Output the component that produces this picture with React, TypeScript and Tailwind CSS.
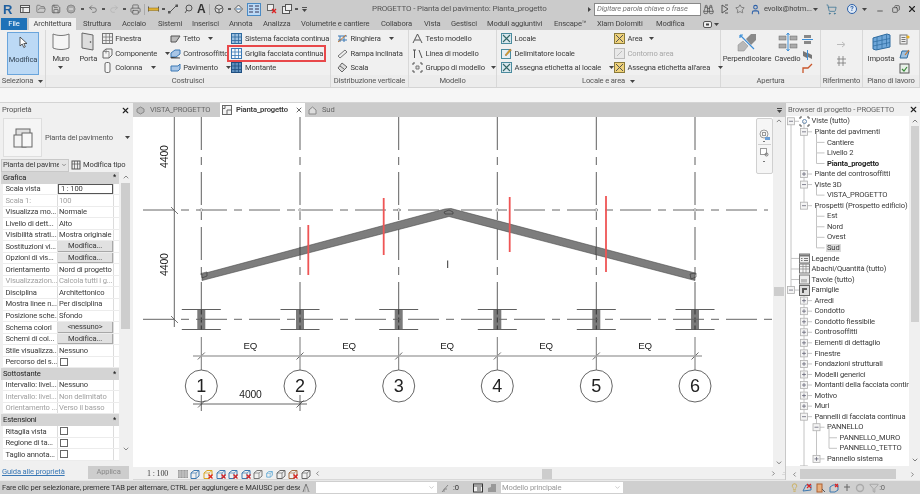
import React from "react";
import { Binoculars, FolderOpen, Minus, Printer, Redo2, Save, ShoppingCart, Star, Undo2, User, X, ChevronUp, ChevronDown, ChevronLeft, ChevronRight, Filter, Lightbulb, Copy } from "lucide-react";

const S = ({ w = 11, h = 11, vb = "0 0 11 11", children, className = "" }: any) => (
  <svg width={w} height={h} viewBox={vb} className={`shrink-0 ${className}`}>{children}</svg>
);
const Caret = ({ c = "#444" }: { c?: string }) => (
  <svg width="5" height="3" viewBox="0 0 5 3" className="shrink-0"><path d="M0 0h5L2.5 3z" fill={c} /></svg>
);
const Dot = () => <div className="w-[3px] h-[2px] bg-[#555] shrink-0" />;

const GridIco = ({ c = "#6a8caf", f = "#e8eef5" }: any) => (
  <S><rect x=".5" y=".5" width="10" height="10" fill={f} stroke={c} /><path d="M4 .5v10M7.5.5v10M.5 4h10M.5 7.5h10" stroke={c} strokeWidth=".8" /></S>
);
const BoxIco = ({ c = "#666" }: any) => (
  <S><path d="M1 3.5l3-2.5h6v6l-3 3H1z" fill="#f4f4f4" stroke={c} /><path d="M4 1v4.5M1 3.5h6v6.5" stroke={c} strokeWidth=".7" fill="none" /></S>
);
const BlueFlat = () => <S><path d="M1 5l4-3h5v4l-4 3H1z" fill="#a9c6e6" stroke="#3a78b5" /><path d="M1 9v1h9" stroke="#555" /></S>;
const RoomIco = ({ c = "#4b8b9e", f = "#d9e8ee", y = false }: any) => (
  <S><rect x=".5" y=".5" width="10" height="10" fill={f} stroke={c} /><path d="M2 2l7 7M9 2L2 9" stroke={y ? "#555" : "#366"} strokeWidth="1.1" /></S>
);
const YellowIco = () => <S><rect x=".5" y=".5" width="10" height="10" fill="#efd27a" stroke="#8a7a3a" /><path d="M2 2l7 7M9 2L2 9" stroke="#555" /></S>;

const Item = ({ icon, label, caret, gray, gap = "gap-[2.5px]", caretClass = "ml-[6px]" }: any) => (
  <div className={`flex items-center h-[14.6px] ${gap} whitespace-nowrap ${gray ? "text-[#a8a8a8]" : ""}`}>
    {icon}
    <span>{label}</span>
    {caret && <span className={caretClass}><Caret /></span>}
  </div>
);

const Panel = ({ w, label, children, caret }: any) => (
  <div className={`${w} flex flex-col border-r border-[#d8d8d8] shrink-0`}>
    <div className="h-[45px] flex pt-[1.5px]">{children}</div>
    <div className="h-[12px] flex items-center justify-center gap-[5px] bg-[#ececec] text-[#555]">
      <span>{label}</span>{caret && <Caret />}
    </div>
  </div>
);

const tabs: [string, string][] = [
  ["Struttura", "w-[39px]"], ["Acciaio", "w-[36px]"], ["Sistemi", "w-[34px]"], ["Inserisci", "w-[37px]"], ["Annota", "w-[34px]"],
  ["Analizza", "w-[38px]"], ["Volumetrie e cantiere", "w-[80px]"], ["Collabora", "w-[43px]"], ["Vista", "w-[27px]"], ["Gestisci", "w-[36px]"],
  ["Moduli aggiuntivi", "w-[67px]"], ["Enscape™", "w-[43px]"], ["Xlam Dolomiti", "w-[59px]"], ["Modifica", "w-[47px]"],
];

type Row = { l: string; v?: string; k?: "btn" | "input" | "check"; g?: boolean; h?: boolean };
const rows: Row[] = [
  { l: "Grafica", h: true },
  { l: "Scala vista", v: "1 : 100", k: "input" },
  { l: "Scala  1:", v: "100", g: true },
  { l: "Visualizza mo...", v: "Normale" },
  { l: "Livello di dett...", v: "Alto" },
  { l: "Visibilità strati...", v: "Mostra originale" },
  { l: "Sostituzioni vi...", v: "Modifica...", k: "btn" },
  { l: "Opzioni di vis...", v: "Modifica...", k: "btn" },
  { l: "Orientamento", v: "Nord di progetto" },
  { l: "Visualizzazion...", v: "Calcola tutti i g...", g: true },
  { l: "Disciplina", v: "Architettonico" },
  { l: "Mostra linee n...", v: "Per disciplina" },
  { l: "Posizione sche...", v: "Sfondo" },
  { l: "Schema colori", v: "<nessuno>", k: "btn" },
  { l: "Schemi di col...", v: "Modifica...", k: "btn" },
  { l: "Stile visualizza...", v: "Nessuno" },
  { l: "Percorso del s...", k: "check" },
  { l: "Sottostante", h: true },
  { l: "Intervallo: livel...", v: "Nessuno" },
  { l: "Intervallo: livel...", v: "Non delimitato", g: true },
  { l: "Orientamento ...", v: "Verso il basso", g: true },
  { l: "Estensioni", h: true },
  { l: "Ritaglia vista", k: "check" },
  { l: "Regione di ta...", k: "check" },
  { l: "Taglio annota...", k: "check" },
];

const PropRow = ({ r }: { r: Row }) =>
  r.h ? (
    <div className="h-[11.55px] bg-[#d4d4d4] flex items-center justify-between pl-[2px] pr-[3px] text-[#222]">
      <span>{r.l}</span><span className="text-[7px] font-bold leading-none">*</span>
    </div>
  ) : (
    <div className={`h-[11.55px] flex bg-white border-b border-[#ececec] ml-[2px] ${r.g ? "text-[#a0a0a0]" : ""}`}>
      <div className="w-[55px] pl-[2.5px] overflow-hidden whitespace-nowrap flex items-center border-r border-[#dcdcdc]">{r.l}</div>
      <div className="w-[56px] flex items-center border-r border-[#dcdcdc] whitespace-nowrap overflow-hidden">
        {r.k === "btn" ? (
          <div className="w-full h-full bg-[#e1e1e1] border-r border-b border-[#a8a8a8] flex items-center justify-center">{r.v}</div>
        ) : r.k === "input" ? (
          <div className="w-full h-full bg-white border border-[#555] pl-[2px] flex items-center">{r.v}</div>
        ) : r.k === "check" ? (
          <div className="ml-[2px] w-[8px] h-[8px] border border-[#666] bg-white" />
        ) : (
          <span className="pl-[1px]">{r.v}</span>
        )}
      </div>
    </div>
  );

type T = { t: string; l: number; e?: "+" | "-"; i?: string; b?: boolean; s?: boolean };
const tree: T[] = [
  { t: "Viste (tutto)", l: 0, e: "-", i: "view" },
  { t: "Piante dei pavimenti", l: 1, e: "-" },
  { t: "Cantiere", l: 2 }, { t: "Livello 2", l: 2 }, { t: "Pianta_progetto", l: 2, b: true },
  { t: "Piante dei controsoffitti", l: 1, e: "+" },
  { t: "Viste 3D", l: 1, e: "-" },
  { t: "VISTA_PROGETTO", l: 2 },
  { t: "Prospetti (Prospetto edificio)", l: 1, e: "-" },
  { t: "Est", l: 2 }, { t: "Nord", l: 2 }, { t: "Ovest", l: 2 }, { t: "Sud", l: 2, s: true },
  { t: "Legende", l: 0, i: "leg" }, { t: "Abachi/Quantità (tutto)", l: 0, i: "tab" }, { t: "Tavole (tutto)", l: 0, i: "sheet" },
  { t: "Famiglie", l: 0, e: "-", i: "fam" },
  ...["Arredi", "Condotto", "Condotto flessibile", "Controsoffitti", "Elementi di dettaglio", "Finestre", "Fondazioni strutturali", "Modelli generici", "Montanti della facciata contin", "Motivo", "Muri"].map((t) => ({ t, l: 1, e: "+" as const })),
  { t: "Pannelli di facciata continua", l: 1, e: "-" },
  { t: "PANNELLO", l: 2, e: "-" },
  { t: "PANNELLO_MURO", l: 3 }, { t: "PANNELLO_TETTO", l: 3 },
  { t: "Pannello sistema", l: 2, e: "+" },
  { t: "Parapetti", l: 1, e: "+" },
];
const RH = 10.55;
const eX = [5, 18, 30.5, 43];
const textPad = ["pl-[26px]", "pl-[28.5px]", "pl-[41px]", "pl-[53.5px]"];

const TreeLines = () => {
  const segs: React.ReactNode[] = [];
  const boxes: React.ReactNode[] = [];
  const Y = (i: number) => RH / 2 + i * RH;
  tree.forEach((n, i) => {
    const x = eX[n.l];
    let j = i - 1;
    while (j >= 0 && tree[j].l > n.l) j--;
    if (j >= 0) {
      segs.push(<path key={`v${i}`} d={`M${x} ${Y(j)}V${Y(i)}`} stroke="#c4c4c4" strokeWidth="1" />);
    }
    const end = n.l === 0 ? 13 : x + 8;
    segs.push(<path key={`h${i}`} d={`M${x} ${Y(i)}H${end}`} stroke="#c4c4c4" strokeWidth="1" />);
    if (n.e) {
      boxes.push(
        <g key={`b${i}`}>
          <rect x={x - 3.5} y={Y(i) - 3.5} width="7" height="7" fill="#f4f4f4" stroke="#b0b0b0" strokeWidth=".8" />
          <path d={n.e === "+" ? `M${x - 2} ${Y(i)}h4M${x} ${Y(i) - 2}v4` : `M${x - 2} ${Y(i)}h4`} stroke="#667" strokeWidth=".8" />
        </g>
      );
    }
  });
  return (
    <svg className="absolute left-0 top-0 pointer-events-none" width="124" height="360" viewBox="0 0 124 360">
      {segs}{boxes}
    </svg>
  );
};

const TreeIcon = ({ k }: { k: string }) => {
  if (k === "view") return <S><path d="M1 3V1h2M8 1h2v2M10 8v2H8M3 10H1V8" stroke="#555" fill="none" /><rect x="3.5" y="3.5" width="4" height="4" rx="2" fill="none" stroke="#6a8caf" /></S>;
  if (k === "leg") return <S><rect x=".5" y="1" width="10" height="9" fill="#eee" stroke="#777" /><rect x="1" y="1.5" width="9" height="2" fill="#777" /><path d="M2 5.5h1.5M5 5.5h4M2 7.5h1.5M5 7.5h4" stroke="#777" /></S>;
  if (k === "tab") return <S><rect x=".5" y="1" width="10" height="9" fill="#f5f5f5" stroke="#777" /><path d="M.5 3.5h10M.5 6h10M4 1v9M7 1v9" stroke="#888" strokeWidth=".7" /></S>;
  if (k === "sheet") return <S><rect x=".5" y="1" width="10" height="9" fill="#eee" stroke="#777" /><rect x="2" y="5" width="6" height="3.5" fill="#bbb" /></S>;
  return <S><rect x=".5" y=".5" width="10" height="10" fill="#ddd" stroke="#666" /><path d="M3 8V3h5v2H5v3z" fill="#555" /></S>;
};

const gridX = [201.3, 300, 398.7, 497.3, 596.3, 695];
const Canvas = () => (
  <svg width="640" height="350" viewBox="133 117 640 350" className="block bg-white">
    {gridX.map((x, i) => (
      <g key={x} stroke="#5f5f5f" fill="none">
        <path d={`M${x} 117V309`} strokeDasharray="33 7 8 7" strokeWidth="1" />
        <rect x={x - 4} y="309.5" width="8" height="20" fill="#7b7b7b" stroke="none" />
        <path d={`M${x - 19.5} 309.5h39M${x - 19.5} 329.5h39`} strokeWidth="1" />
        <path d={`M${x} 309.5V329.5`} strokeDasharray="5 3" stroke="#333" />
        <path d={`M${x} 337V370`} stroke="#777" />
        <circle cx={x} cy="386" r="16" fill="#fff" stroke="#555" strokeWidth=".9" />
        <path d={`M${x - 3.5} 359.5l7-7`} stroke="#444" strokeWidth=".8" />
      </g>
    ))}
    <path d="M143 210H768M143 319.3H773" stroke="#666" strokeWidth="1" strokeDasharray="31 7 8 7" fill="none" />
    {gridX.map((x) => <circle key={x} cx={x} cy="210" r="1.3" fill="#fff" stroke="#777" strokeWidth=".7" />)}
    <path d="M174.3 117V327" stroke="#666" />
    <path d="M171 207l7 7M171 316l7 7" stroke="#555" strokeWidth=".8" />
    <polygon points="202,274 445,209 451,208.5 695,273 695,280.5 449,216.5 202,280.5" fill="#7d7d7d" stroke="#4c4c4c" strokeWidth=".6" />
    <path d="M201 273.5l6-1.5v4l-5 2zM690 274l6-1v4l-5 2zM444 212l5-2 4 2v2h-8z" fill="none" stroke="#333" strokeWidth=".6" />
    <path d="M300 247v8M596 247v8" stroke="#333" strokeWidth=".7" />
    <path d="M308.3 225V275M383.7 198V255M509.7 197V252M606 196V272" stroke="#ef5555" strokeWidth="1.8" />
    <path d="M447.7 260.5V268" stroke="#333" strokeWidth="1" />
    <path d="M193 356H702" stroke="#aaa" strokeWidth="1.4" />
    <path d="M193 404H307M201.3 395V411M300 395V411" stroke="#555" strokeWidth=".9" />
    <path d="M198 407.5l7-7M296.5 407.5l7-7" stroke="#444" strokeWidth=".8" />
    <g fontFamily="'Liberation Sans',sans-serif" fill="#222">
      {[250.3, 349, 447, 546, 645].map((x) => <text key={x} x={x} y="349" fontSize="9.7" textAnchor="middle">EQ</text>)}
      <text x="250.5" y="398" fontSize="10.3" textAnchor="middle">4000</text>
      {gridX.map((x, i) => <text key={x} x={x} y="392.3" fontSize="18" textAnchor="middle">{i + 1}</text>)}
      <text transform="translate(168 168) rotate(-90)" fontSize="10.5">4400</text>
      <text transform="translate(168 276) rotate(-90)" fontSize="10.5">4400</text>
    </g>
  </svg>
);

const MiniIcons = () => {
  const cols = ["#888", "#3d78b0", "#d9a520", "#3d78b0", "#3d78b0", "#3d78b0", "#777", "#3d9ad0", "#666", "#a06a40", "#666"];
  const xs = [true, false, true, true, true, true, false, false, false, true, false];
  return (
    <div className="flex items-center gap-[2.6px]">
      {cols.map((c, i) => (
        <S key={i} w={i === 7 ? 7 : 10} h={10} vb="0 0 10 10">
          {i === 0 ? <g><rect y="1" width="10" height="8" fill="#999" /><path d="M0 3h10M0 5h10M0 7h10M2 1v8M5 1v8M8 1v8" stroke="#ddd" strokeWidth=".6" /></g> :
            <g><path d="M1 4l3-2.5h5V7l-3 2.5H1z" fill="none" stroke={c} strokeWidth="1" /><path d="M1 4h5v5.5M6 4l3-2.5" stroke={c} strokeWidth=".7" fill="none" /></g>}
          {xs[i] && i !== 0 && <path d="M5.5 5.5l4 4M9.5 5.5l-4 4" stroke="#d22" strokeWidth="1.2" />}
        </S>
      ))}
    </div>
  );
};

export default function App() {
  return (
    <div className="w-[920px] h-[494px] overflow-hidden flex flex-col bg-[#f0f0f0] text-[#3a3a3a] text-[7.6px] tracking-[-0.02em] leading-none font-['Roboto',sans-serif] blur-[0.3px]">
      {/* title */}
      <div className="h-[18px] bg-[#cbcbcb] flex items-center relative shrink-0">
        <span className="ml-[3px] w-[11px] text-[13px] font-bold text-[#1f5f9f] font-['Liberation_Sans',sans-serif]">R</span>
        <div className="ml-[6px] flex items-center text-[#555]">
          <S w={10} h={10} vb="0 0 10 10"><rect x=".5" y="1.5" width="9" height="7" fill="#eee" stroke="#555" /><path d="M.5 3.5h9M3 3.5v5" stroke="#555" /></S>
          <FolderOpen size={10} strokeWidth={1.4} className="ml-[6px]" />
          <Save size={10} strokeWidth={1.8} className="ml-[5px]" />
          <S w={10} h={10} vb="0 0 10 10" className="ml-[5px]"><circle cx="5" cy="5" r="4" fill="#aaa" stroke="#888" /><path d="M3 5h4" stroke="#eee" /></S>
          <div className="ml-[5px]"><Dot /></div>
          <Undo2 size={10} strokeWidth={1.5} className="ml-[4px]" />
          <div className="ml-[4px]"><Dot /></div>
          <Redo2 size={10} strokeWidth={1.3} className="ml-[4px] text-[#aaa]" />
          <div className="ml-[4px]"><Dot /></div>
          <Printer size={11} strokeWidth={1.5} className="ml-[4px]" />
          <div className="ml-[3px] w-px h-[11px] bg-[#aaa]" />
          <S w={11} h={10} vb="0 0 11 10" className="ml-[3px]"><path d="M.5 2.5v5M10.5 2.5v5" stroke="#555" /><rect x=".5" y="4" width="10" height="2.5" fill="#e0b030" stroke="#8a6a10" strokeWidth=".5" /></S>
          <div className="ml-[3px]"><Dot /></div>
          <S w={10} h={10} vb="0 0 10 10" className="ml-[3px]"><path d="M1 9l8-8" stroke="#555" /><rect x="0" y="7" width="2.5" height="2.5" fill="#555" /><rect x="7.5" y=".5" width="2.5" height="2.5" fill="#555" /></S>
          <S w={9} h={10} vb="0 0 9 10" className="ml-[6px]"><circle cx="5" cy="4" r="3" fill="none" stroke="#555" /><path d="M3 6L1 9" stroke="#555" /></S>
          <span className="ml-[4px] w-[9px] text-[12px] font-bold text-[#333] font-['Liberation_Sans',sans-serif]">A</span>
          <div className="ml-[3px] w-px h-[11px] bg-[#aaa]" />
          <S w={10} h={10} vb="0 0 10 10" className="ml-[4px]"><circle cx="5" cy="5" r="4" fill="#ddd" stroke="#555" /><path d="M2 4l3 1.5L8 4M5 5.5V9" stroke="#555" fill="none" /></S>
          <div className="ml-[4px]"><Dot /></div>
          <S w={9} h={10} vb="0 0 9 10" className="ml-[3px]"><path d="M4.5 1l4 4-4 4-4-4z" fill="#eee" stroke="#555" /><path d="M2 5h5" stroke="#3d78b0" /></S>
          <div className="ml-[4px] w-[14px] h-[13px] bg-[#bcd9f5] border border-[#4a8ac4] flex items-center justify-center">
            <S w={10} h={9} vb="0 0 10 9"><path d="M0 1h4M0 4h4M0 7h4M6 1h4M6 4h4M6 7h4" stroke="#335" strokeWidth="1" /></S>
          </div>
          <S w={10} h={10} vb="0 0 10 10" className="ml-[6px]"><rect x=".5" y=".5" width="6" height="6" fill="#eee" stroke="#666" /><path d="M5 5l4 4M9 5L5 9" stroke="#d22" strokeWidth="1.3" /></S>
          <S w={10} h={10} vb="0 0 10 10" className="ml-[5px]"><rect x=".5" y="2.5" width="7" height="7" fill="#eee" stroke="#555" /><rect x="3.5" y=".5" width="6" height="6" fill="#eee" stroke="#555" /></S>
          <div className="ml-[3px]"><Dot /></div>
          <div className="ml-[4px] flex flex-col items-center gap-[1px]"><div className="w-[5px] h-px bg-[#555]" /><Caret /></div>
        </div>
        <span className="absolute left-[372px] top-[2px] h-[13px] flex items-center whitespace-nowrap text-[#555] text-[8px]">PROGETTO - Pianta del pavimento: Pianta_progetto</span>
        <div className="ml-auto flex items-center">
          <svg width="3" height="5" viewBox="0 0 3 5" className="mr-[3px]"><path d="M0 0l3 2.5L0 5z" fill="#444" /></svg>
          <div className="w-[107px] h-[13px] bg-white border border-[#888] pl-[2px] flex items-center italic text-[#777] whitespace-nowrap overflow-hidden">Digitare parola chiave o frase</div>
          <Binoculars size={11} strokeWidth={1.5} className="ml-[2px] text-[#444]" />
          <S w={10} h={10} vb="0 0 10 10" className="ml-[6px]"><path d="M2 1l6 4-6 4zM5 1h3M5 9h3" stroke="#555" fill="none" /></S>
          <Star size={10} strokeWidth={1.3} className="ml-[5px] text-[#444]" />
          <User size={11} strokeWidth={2.2} className="ml-[5px] text-[#2a5fa8]" />
          <span className="ml-[3px] whitespace-nowrap text-[#444] w-[46px]">evolix@hotm...</span>
          <div className="ml-[3px]"><Caret /></div>
          <ShoppingCart size={11} strokeWidth={1.5} className="ml-[8px] text-[#2a6a8f]" />
          <div className="ml-[10px] w-[10px] h-[10px] rounded-full border border-[#2a5fa8] bg-[#dfe9f5] text-[#2a5fa8] flex items-center justify-center text-[7px] font-bold">?</div>
          <div className="ml-[5px]"><Caret /></div>
          <Minus size={8} strokeWidth={2.2} className="ml-[9px] mt-[4px] text-[#333]" />
          <Copy size={8} strokeWidth={2} className="ml-[8px] text-[#333] -scale-x-100" />
          <X size={10} strokeWidth={2.6} className="ml-[7px] mr-[3px] text-[#222]" />
        </div>
      </div>
      {/* tabs */}
      <div className="h-[12px] bg-[#cbcbcb] flex items-stretch shrink-0 whitespace-nowrap text-[#444]">
        <div className="ml-[1px] w-[26px] bg-[#1f72b8] text-white flex items-center justify-center">File</div>
        <div className="ml-[2px] w-[47px] bg-[#f0f0f0] flex items-center justify-center">Architettura</div>
        <div className="w-[7px]" />
        {tabs.map(([t, w]) => <div key={t} className={`${w} flex items-center`}>{t}</div>)}
        <div className="flex items-center gap-[2px]">
          <S w={9} h={7} vb="0 0 9 7"><rect x=".5" y=".5" width="8" height="6" rx="1.5" fill="#eee" stroke="#555" /><rect x="3" y="2.5" width="3" height="2" fill="#444" /></S><Caret />
        </div>
      </div>
      {/* ribbon */}
      <div className="h-[58px] bg-[#f0f0f0] border-b border-[#d4d4d4] flex shrink-0 whitespace-nowrap overflow-hidden">
        <Panel w="w-[46px]" label="Seleziona" caret>
          <div className="ml-[7px] w-[32px] h-[43px] bg-[#bcd9f5] border border-[#6aa5dc] flex flex-col items-center">
            <svg width="9" height="13" viewBox="0 0 9 13" className="mt-[3px]"><path d="M1 1v9l2.2-2 1.6 3.5 1.5-.7L4.8 7.5H8z" fill="#fff" stroke="#333" strokeWidth=".8" /></svg>
            <span className="mt-[7px] text-[#345]">Modifica</span>
          </div>
        </Panel>
        <Panel w="w-[285px]" label="Costruisci">
          <div className="w-[30px] flex flex-col items-center">
            <svg width="18" height="19" viewBox="0 0 18 19"><path d="M1 2c5 2 11 2 16 0v14c-5 2-11 2-16 0z" fill="#f5f5f5" stroke="#777" /></svg>
            <span className="mt-[4px]">Muro</span>
            <span className="mt-[4px]"><Caret /></span>
          </div>
          <div className="w-[25px] flex flex-col items-center">
            <svg width="14" height="19" viewBox="0 0 14 19"><path d="M1 1l11 2v15L1 16z" fill="#ddd" stroke="#666" /><circle cx="9.5" cy="10" r=".8" fill="#444" /></svg>
            <span className="mt-[4px]">Porta</span>
          </div>
          <div className="w-[69px] pl-[1px]">
            <Item icon={<GridIco c="#777" f="#eee" />} label="Finestra" />
            <Item icon={<BoxIco />} label="Componente" caret caretClass="ml-[5px]" />
            <Item icon={<S><rect x="3" y=".5" width="5" height="10" rx="1.5" fill="#f5f5f5" stroke="#666" /></S>} label="Colonna" caret />
          </div>
          <div className="w-[62px]">
            <Item icon={<S><path d="M1 9V3h9L6 9z" fill="#bbb" stroke="#555" /></S>} label="Tetto" caret />
            <Item icon={<BlueFlat />} label="Controsoffitto" />
            <Item icon={<S><path d="M1 4h7l2-2v5l-2 2H1z" fill="#a9c6e6" stroke="#3a78b5" /></S>} label="Pavimento" caret />
          </div>
          <div className="w-[99px]">
            <Item icon={<GridIco c="#2d6a9f" f="#9cc0e0" />} label="Sistema facciata continua" />
            <div className="w-[99px] h-[17.6px] -my-[1.5px] -ml-[4px] pl-[2px] border-2 border-[#e8484a] flex items-center">
              <Item icon={<GridIco c="#3a78b5" f="#f5f8fc" />} label="Griglia facciata continua" />
            </div>
            <Item icon={<GridIco c="#1f4f80" f="#5f8fbd" />} label="Montante" />
          </div>
        </Panel>
        <Panel w="w-[78px]" label="Distribuzione verticale">
          <div className="pl-[6px]">
            <Item icon={<S><path d="M1 3h9M1 7h9M3 3v6M7 3v6" stroke="#3a78b5" /><path d="M1 9l8-7" stroke="#c9762a" /></S>} label="Ringhiera" caret />
            <Item icon={<S><path d="M1 8l7-6 2 2-7 6z" fill="#eee" stroke="#777" /></S>} label="Rampa inclinata" />
            <Item icon={<S><path d="M5 1l5 4-5 5-4-4z" fill="#ddd" stroke="#666" /><path d="M3 4l4 3" stroke="#666" /></S>} label="Scala" />
          </div>
        </Panel>
        <Panel w="w-[88px]" label="Modello">
          <div className="pl-[3px]">
            <Item icon={<S><path d="M5.5 1L1 10M5.5 1L10 10M3 7h5" stroke="#555" fill="none" /></S>} label="Testo modello" />
            <Item icon={<S><path d="M1 2h3M2.5 2v8M7 2l3 8" stroke="#555" fill="none" /></S>} label="Linea di modello" />
            <Item icon={<S><path d="M1 3V1h2M8 1h2v2M10 8v2H8M3 10H1V8" stroke="#555" fill="none" /><path d="M4 4h3v3H4z" fill="#ddd" stroke="#777" /></S>} label="Gruppo di modello" caret caretClass="ml-[4px]" />
          </div>
        </Panel>
        <Panel w="w-[224px]" label="Locale e area" caret>
          <div className="w-[116px] pl-[4px] shrink-0">
            <Item icon={<RoomIco />} label="Locale" />
            <Item icon={<S><rect x=".5" y="1.5" width="9" height="9" fill="#e8eef2" stroke="#4b8b9e" /><path d="M4 7l5-6 1.5 1L5 8z" fill="#d9a520" stroke="#855" strokeWidth=".4" /></S>} label="Delimitatore  locale" />
            <Item icon={<RoomIco />} label="Assegna etichetta  al locale" caret caretClass="ml-[5px]" />
          </div>
          <div className="pl-[1px]">
            <Item icon={<YellowIco />} label="Area" caret caretClass="ml-[4px]" />
            <Item gray icon={<S><rect x=".5" y=".5" width="10" height="10" fill="#e8e8e8" stroke="#bbb" /><path d="M3 8l5-5" stroke="#bbb" /></S>} label="Contorno  area" />
            <Item icon={<YellowIco />} label="Assegna etichetta  all'area" caret caretClass="ml-[5px]" />
          </div>
        </Panel>
        <Panel w="w-[100px]" label="Apertura">
          <div className="w-[52px] flex flex-col items-center">
            <svg width="20" height="20" viewBox="0 0 20 20"><path d="M9 7l5-5h5v6l-5 5z" fill="#8a8a8a" /><path d="M1 13l5-4 5 5-4 5H1z" fill="#b8b8b8" stroke="#888" strokeWidth=".5" /><path d="M3 3l14 14M3 3h3M3 3v3" stroke="#3d8fd8" strokeWidth="1.2" fill="none" /></svg>
            <span className="mt-[3px]">Perpendicolare</span>
          </div>
          <div className="w-[29px] flex flex-col items-center">
            <svg width="20" height="20" viewBox="0 0 20 20"><rect x="1" y="4" width="7" height="4" fill="#aaa" stroke="#666" strokeWidth=".5" /><rect x="12" y="4" width="7" height="4" fill="#aaa" stroke="#666" strokeWidth=".5" /><rect x="1" y="12" width="7" height="4" fill="#aaa" stroke="#666" strokeWidth=".5" /><rect x="12" y="12" width="7" height="4" fill="#aaa" stroke="#666" strokeWidth=".5" /><path d="M10 1v18M8.5 3L10 1l1.5 2M8.5 17l1.5 2 1.5-2" stroke="#3d8fd8" fill="none" /></svg>
            <span className="mt-[3px]">Cavedio</span>
          </div>
          <div className="pt-[1px]">
            <Item icon={<S><rect x="2" y="1" width="7" height="3" fill="#888" /><rect x="2" y="7" width="7" height="3" fill="#888" /><path d="M0 5.5h11" stroke="#3d8fd8" /></S>} label="" />
            <Item icon={<S><path d="M1 2l4 2v5L1 7zM6 4l4 2v4l-4-2z" fill="#777" /><path d="M5.5 1v10" stroke="#3d8fd8" /></S>} label="" />
            <Item icon={<S><path d="M1 10V5h5l4-4" stroke="#c9562a" strokeWidth="1.3" fill="none" /></S>} label="" />
          </div>
        </Panel>
        <Panel w="w-[42px]" label="Riferimento">
          <div className="w-full flex flex-col items-center pt-[7px] gap-[5px]">
            <S><path d="M1 5.5h7M6 3l3 2.5L6 8" stroke="#bbb" fill="none" /></S>
            <S><path d="M3 1v10M7 1v10M1 4h9M1 8h9" stroke="#777" strokeWidth=".8" /></S>
          </div>
        </Panel>
        <Panel w="w-[57px]" label="Piano di lavoro">
          <div className="w-[36px] flex flex-col items-center">
            <svg width="19" height="20" viewBox="0 0 19 20"><path d="M1 6l14-4 3 1v12L4 18l-3-1z" fill="#6ea6d8" stroke="#2d6a9f" /><path d="M5 5v13M10 3.5v13M14.5 2.5v12M1 10l17-3.5M1 14l17-3.5" stroke="#2d6a9f" strokeWidth=".7" /></svg>
            <span className="mt-[3px]">Imposta</span>
          </div>
          <div className="pt-[1px]">
            <Item icon={<S><rect x="1" y="1" width="7" height="9" fill="#eee" stroke="#777" /><path d="M2.5 3.5h4M2.5 5.5h4M2.5 7.5h4" stroke="#777" /><circle cx="9" cy="3" r="1.6" fill="#e8b020" /></S>} label="" />
            <Item icon={<S><path d="M1 9l2-7h7L8 9z" fill="#9cc0e0" stroke="#2d6a9f" /><path d="M6 6l4-5" stroke="#c9762a" strokeWidth="1.2" /></S>} label="" />
            <Item icon={<S><rect x="1" y="1" width="9" height="9" fill="#e8f0e8" stroke="#555" /><path d="M3 6l2 2 3-4" stroke="#3a8a3a" strokeWidth="1.2" fill="none" /></S>} label="" />
          </div>
        </Panel>
      </div>
      <div className="h-[15px] bg-[#f6f6f6] border-b border-[#d4d4d4] shrink-0" />
      {/* main */}
      <div className="flex-1 min-h-0 flex">
        {/* props */}
        <div className="w-[133px] shrink-0 flex flex-col bg-[#f0f0f0] overflow-hidden whitespace-nowrap">
          <div className="h-[14px] flex items-center justify-between pl-[2px] pr-[3px] text-[#555]">
            <span>Proprietà</span><X size={9} strokeWidth={3} className="text-[#222]" />
          </div>
          <div className="h-[41px] flex items-center ml-[3px] mr-[3px]">
            <div className="w-[39px] h-[39px] bg-[#f5f5f5] border border-[#dedede] flex items-center justify-center">
              <svg width="20" height="20" viewBox="0 0 20 20"><rect x="3" y="1" width="14" height="14" fill="#e0e0e0" stroke="#666" /><rect x="1" y="7" width="12" height="12" fill="#f4f4f4" stroke="#666" /><rect x="9" y="5" width="10" height="14" fill="#f8f8f8" stroke="#666" /></svg>
            </div>
            <span className="ml-[3px] text-[#555]">Pianta del pavimento</span>
            <span className="ml-auto"><Caret /></span>
          </div>
          <div className="h-[14px] flex items-center">
            <div className="ml-[1px] w-[68px] h-[13px] bg-[#e4e4e4] border border-[#c8c8c8] pl-[1px] flex items-center justify-between pr-[1px] overflow-hidden">
              <span className="w-[56px] overflow-hidden">Pianta del pavime</span><ChevronDown size={6} className="shrink-0" />
            </div>
            <S w={10} h={10} vb="0 0 10 10" className="ml-[2px]"><rect x="1" y="1" width="8" height="8" fill="#eee" stroke="#555" /><path d="M3.5 1v8M6.5 1v8M1 4h8" stroke="#555" strokeWidth=".7" /></S>
            <span className="ml-[2px]">Modifica tipo</span>
          </div>
          <div className="flex flex-1 min-h-0">
            <div className="w-[119px] shrink-0 overflow-hidden pl-[1px]">
              {rows.map((r, i) => <PropRow key={i} r={r} />)}
            </div>
            <div className="w-[11px] ml-[1px] bg-[#f0f0f0] flex flex-col items-center relative">
              <ChevronUp size={8} className="text-[#555] mt-[1px]" />
              <div className="mt-[2px] w-[9px] h-[146px] bg-[#cdcdcd]" />
              <ChevronDown size={8} className="text-[#555] mt-[116px]" />
            </div>
          </div>
          <div className="h-[16px] shrink-0 flex items-center pl-[2px]">
            <span className="text-[#3a78b5] underline w-[64px]">Guida alle proprietà</span>
            <div className="ml-[22px] w-[41px] h-[13px] bg-[#cdcdcd] text-[#8a8a8a] flex items-center justify-center">Applica</div>
          </div>
        </div>
        {/* center */}
        <div className="w-[652px] shrink-0 flex flex-col">
          <div className="h-[14px] bg-[#cbcbcb] flex items-stretch whitespace-nowrap shrink-0">
            <div className="w-[87px] flex items-center pl-[3px] text-[#666] gap-[5px]">
              <S w={9} h={9} vb="0 0 9 9"><path d="M4.5 1L8 3v3L4.5 8 1 6V3z" fill="#bbb" stroke="#888" /></S>
              <span>VISTA_PROGETTO</span>
            </div>
            <div className="w-[85px] bg-white flex items-center pl-[2px] gap-[4px]">
              <S w={10} h={10} vb="0 0 10 10"><rect x=".5" y=".5" width="9" height="9" fill="#f4f4f4" stroke="#666" /><path d="M3 .5v3H.5M5 9.5V5h4.5" stroke="#666" fill="none" /></S>
              <span className="font-semibold w-[55px]">Pianta_progetto</span>
              <X size={8} strokeWidth={2.2} className="text-[#333]" />
            </div>
            <div className="flex items-center pl-[3px] gap-[5px] text-[#666] flex-1">
              <S w={9} h={9} vb="0 0 9 9"><path d="M1 4L4.5 1 8 4v4H1z" fill="#ddd" stroke="#888" /></S>
              <span>Sud</span>
              <div className="ml-auto mr-[3px] flex flex-col items-center gap-[1px]"><div className="w-[5px] h-px bg-[#444]" /><Caret /></div>
            </div>
          </div>
          <div className="flex flex-1 min-h-0">
            <div className="w-[640px] h-[350px] relative overflow-hidden">
              <Canvas />
              <div className="absolute left-[622.5px] top-[1px] w-[17px] h-[56px] bg-[#f6f6f6] border border-[#d0d0d0] rounded-[2px] flex flex-col items-center pt-[10px]">
                <S w={11} h={11}><circle cx="5" cy="5" r="4" fill="none" stroke="#999" /><rect x="3.5" y="3.5" width="3" height="3" fill="none" stroke="#999" /><rect x="6" y="8" width="5" height="3" fill="#6a9fd8" /></S>
                <div className="mt-[1px] w-[2px] h-[1px] bg-[#777]" />
                <div className="mt-[2px] w-[13px] h-px bg-[#d0d0d0]" />
                <S w={9} h={9} vb="0 0 9 9" className="mt-[3px]"><rect x=".5" y=".5" width="6" height="6" fill="#fff" stroke="#999" /><circle cx="6.5" cy="6.5" r="1.5" fill="none" stroke="#777" /></S>
                <div className="mt-[4px] w-[2px] h-[1px] bg-[#777]" />
              </div>
            </div>
            <div className="w-[12px] h-[350px] bg-[#f0f0f0] flex flex-col items-center shrink-0">
              <ChevronUp size={8} className="text-[#444] mt-[0px]" />
              <div className="mt-[162px] w-[10px] h-[10px] bg-[#cdcdcd]" />
              <ChevronDown size={8} className="text-[#444] mt-[163px]" />
            </div>
          </div>
          <div className="h-[12px] bg-[#f0f0f0] flex items-center shrink-0 border-b border-[#d8d8d8]">
            <span className="ml-[14px] font-['Liberation_Serif',serif] text-[8px] w-[31px]">1 : 100</span>
            <MiniIcons />
            <ChevronLeft size={7} strokeWidth={2} className="ml-[3px] text-[#444]" />
            <div className="ml-[221px] w-[10px] h-[10px] bg-[#cdcdcd]" />
            <ChevronRight size={7} strokeWidth={2} className="ml-[218px] text-[#444]" />
            <span className="ml-[5px] text-[5px] text-[#999] leading-none">.::</span>
          </div>
        </div>
        {/* browser */}
        <div className="flex-1 min-w-0 flex flex-col border-l border-[#c8c8c8] whitespace-nowrap">
          <div className="h-[13px] bg-[#f0f0f0] flex items-center justify-between pl-[2px] pr-[2px] text-[#666] shrink-0">
            <span>Browser di progetto - PROGETTO</span><X size={9} strokeWidth={3} className="text-[#222]" />
          </div>
          <div className="flex-1 min-h-0 flex">
            <div className="w-[123px] h-[350px] bg-white relative overflow-hidden shrink-0">
              <TreeLines />
              <div className="relative">
                {tree.map((n) => (
                  <div key={n.t} className={`h-[10.55px] flex items-center ${n.i ? "pl-[12.5px] gap-[2px]" : textPad[n.l]}`}>
                    {n.i && <TreeIcon k={n.i} />}
                    <span className={`${n.b ? "font-bold text-[#222]" : ""} ${n.s ? "bg-[#dcdcdc] px-[1px] -ml-[1px]" : ""}`}>{n.t}</span>
                  </div>
                ))}
              </div>
            </div>
            <div className="flex-1 bg-[#f0f0f0] flex flex-col items-center">
              <ChevronUp size={8} className="text-[#444] mt-[1px]" />
              <div className="mt-[1px] w-[8px] h-[196px] bg-[#d0d0d0]" />
              <ChevronDown size={8} className="text-[#444] mt-[134px]" />
            </div>
          </div>
          <div className="h-[12px] bg-[#f0f0f0] flex items-center shrink-0 text-[#444]">
            <ChevronLeft size={7} strokeWidth={2} className="ml-[5px]" />
            <div className="ml-[2px] w-[96px] h-[10px] bg-[#cdcdcd]" />
            <ChevronRight size={7} strokeWidth={2} className="ml-[13px]" />
          </div>
        </div>
      </div>
      {/* status */}
      <div className="h-[14px] bg-[#cfcfcf] border-t border-[#e8e8e8] flex items-center shrink-0 whitespace-nowrap">
        <span className="ml-[2px] w-[298px] overflow-hidden text-[#333]">Fare clic per selezionare, premere TAB per alternare, CTRL per aggiungere e MAIUSC per desel</span>
        <S w={9} h={10} vb="0 0 9 10" className="ml-[2px]"><path d="M1 9l3-8 3 8" stroke="#777" fill="none" /><path d="M3 9V5M6 9V5" stroke="#aaa" /></S>
        <div className="ml-[5px] w-[121px] h-[11px] bg-white flex items-center justify-end pr-[2px]"><ChevronDown size={7} className="text-[#aaa]" /></div>
        <S w={9} h={10} vb="0 0 9 10" className="ml-[4px]"><path d="M1 9l6-7M3 9V6h3" stroke="#888" fill="none" /></S>
        <span className="ml-[3px] w-[12px] text-[#333]">:0</span>
        <S w={10} h={10} vb="0 0 10 10" className="ml-[8px]"><rect x=".5" y="1" width="9" height="8" fill="#eee" stroke="#333" /><path d="M.5 3h9M4 5h4M4 7h4" stroke="#333" strokeWidth=".8" /></S>
        <S w={10} h={10} vb="0 0 10 10" className="ml-[4px]"><path d="M1 9V5l3-1V1h5v8z" fill="#999" /></S>
        <div className="ml-[4px] w-[122px] h-[11px] bg-white flex items-center justify-between pl-[1px] pr-[2px] text-[#999]"><span>Modello principale</span><ChevronDown size={7} className="text-[#aaa]" /></div>
        <div className="ml-auto flex items-center gap-[3.5px] mr-[35px]">
          <Lightbulb size={9} strokeWidth={1.6} className="text-[#c9a020]" />
          <S w={10} h={10} vb="0 0 10 10"><path d="M1 8l3-6h5v5z" fill="none" stroke="#3d78b0" /><path d="M5 1l4 4M9 1L5 5" stroke="#d22" strokeWidth="1.1" /></S>
          <S w={10} h={10} vb="0 0 10 10"><rect x="1" y="1" width="5" height="8" fill="#e8b080" stroke="#b06030" /><path d="M6 6l3 3" stroke="#555" /></S>
          <S w={10} h={10} vb="0 0 10 10"><path d="M1 4l3-2h5v5l-3 2H1z" fill="none" stroke="#3d78b0" /><path d="M6 1l3 3M9 1L6 4" stroke="#d22" strokeWidth="1.1" /></S>
          <S w={9} h={9} vb="0 0 9 9"><path d="M4 1v7M1 4h6" stroke="#666" /></S>
          <S w={10} h={10} vb="0 0 10 10"><circle cx="5" cy="5" r="3.5" fill="none" stroke="#aaa" strokeWidth="1.4" /></S>
          <Filter size={10} strokeWidth={1.3} className="text-[#888]" />
          <span className="-ml-[3px] text-[#666]">:0</span>
        </div>
      </div>
    </div>
  );
}
